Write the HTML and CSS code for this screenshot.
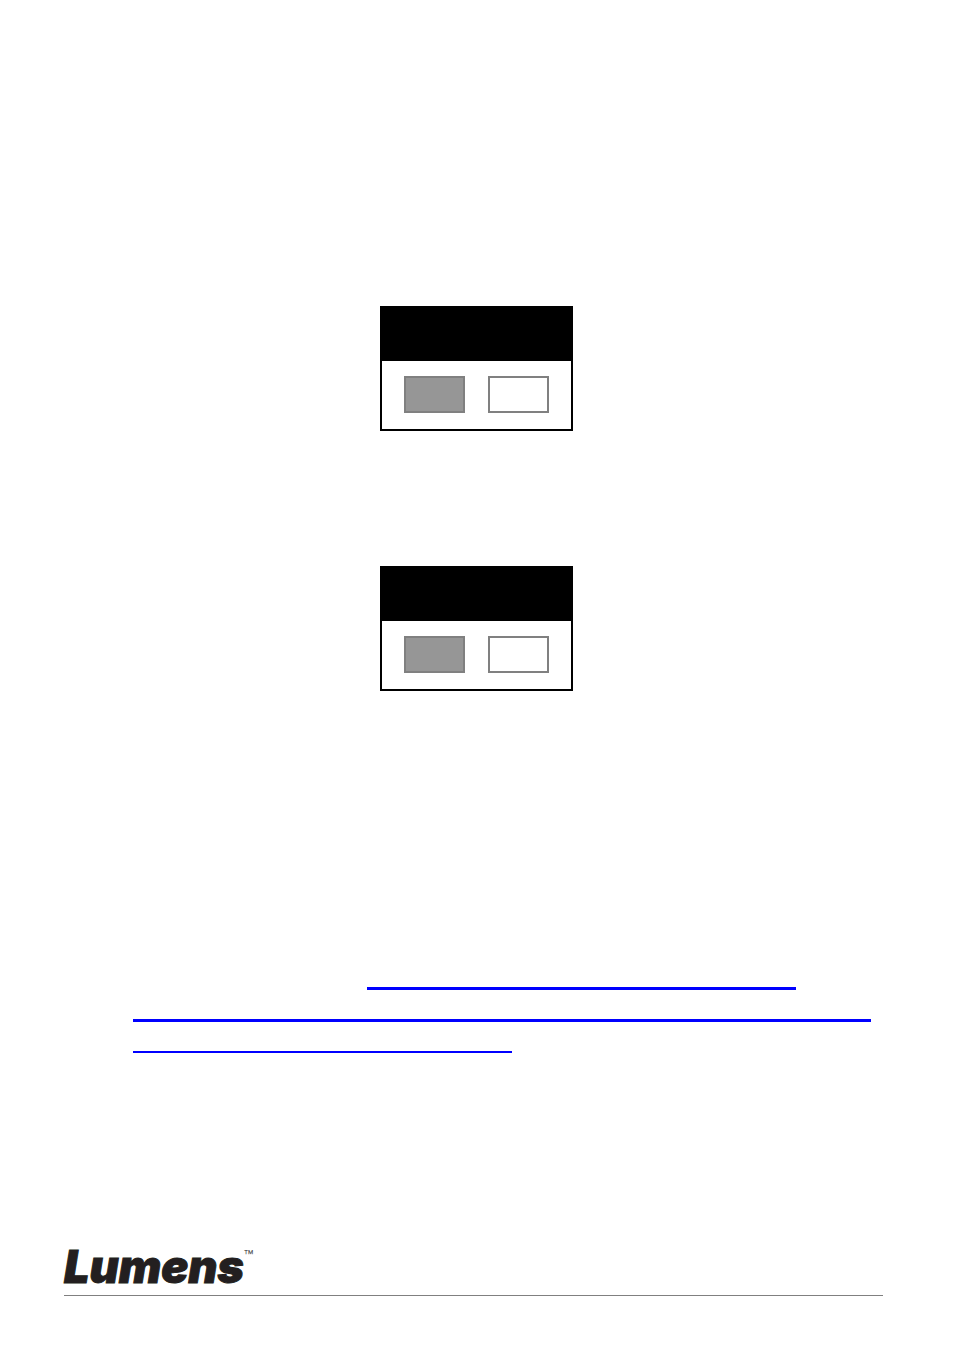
FILE: index.html
```html
<!DOCTYPE html>
<html lang="en">
<head>
  <meta charset="UTF-8">
  <meta name="viewport" content="width=device-width, initial-scale=1.0">
  <title>Lumens</title>
  <link rel="stylesheet" href="styles.css">
</head>
<body>
  <main class="content">
    <!-- Dialog boxes -->
    <section class="dialog">
      <div class="dialog-header"></div>
      <div class="dialog-actions">
        <button type="button" class="btn btn-selected" aria-label="Yes"></button>
        <button type="button" class="btn" aria-label="No"></button>
      </div>
    </section>

    <section class="dialog">
      <div class="dialog-header"></div>
      <div class="dialog-actions">
        <button type="button" class="btn btn-selected" aria-label="Yes"></button>
        <button type="button" class="btn" aria-label="No"></button>
      </div>
    </section>

    <!-- Underlined links -->
    <nav class="links">
      <a href="#" class="link link-start" aria-label="Link 1"></a>
      <a href="#" class="link link-full" aria-label="Link 2"></a>
      <a href="#" class="link link-end" aria-label="Link 3"></a>
    </nav>
  </main>

  <footer class="footer">
    <span class="logo">Lumens</span><span class="trademark">™</span>
  </footer>
</body>
</html>
```

FILE: styles.css
```css
* {
  box-sizing: border-box;
}

body {
  margin: 0;
  background-color: white;
  font-family: Inter, "Liberation Sans", sans-serif;
}

.content {
  display: flex;
  flex-direction: column;
  align-items: center;
  padding-top: 306px;
}

/* Dialog box with a black title area */
.dialog {
  width: 193px;
  margin-bottom: 135px;
  border: 2px solid black;
}

.dialog-header {
  height: 53px;
  background-color: black;
}

.dialog-actions {
  display: flex;
  justify-content: center;
  gap: 23px;
  padding: 15px 0 16px;
}

.btn {
  width: 61px;
  height: 37px;
  padding: 0;
  border: 2px solid #808080;
  background-color: white;
  cursor: pointer;
}

.btn-selected {
  background-color: #969696;
}

/* Link lines, the first one starts part way along */
.links {
  display: grid;
  grid-template-columns: 234fr 145fr 284fr 75fr;
  align-self: stretch;
  margin: 132px 82px 0 133px;
}

.link {
  height: 32px;
  border-bottom: 3px solid #0000ff;
}

.link-start {
  grid-column: 2 / 4;
}

.link-full {
  grid-column: 1 / 5;
}

.link-end {
  grid-column: 1 / 3;
  height: 31px;
  border-bottom-width: 2px;
}

/* Footer with the logo above a rule */
.footer {
  display: flex;
  align-items: flex-start;
  margin: 193px 70px 56px 64px;
  padding-bottom: 7px;
  border-bottom: 1px solid #808080;
}

.logo {
  color: #231f20;
  font-size: 45px;
  font-style: italic;
  font-weight: 900;
  line-height: 42px;
  -webkit-text-stroke: 1px #231f20;
}

.trademark {
  color: #555;
  font-size: 16px;
  line-height: 20px;
}
```
